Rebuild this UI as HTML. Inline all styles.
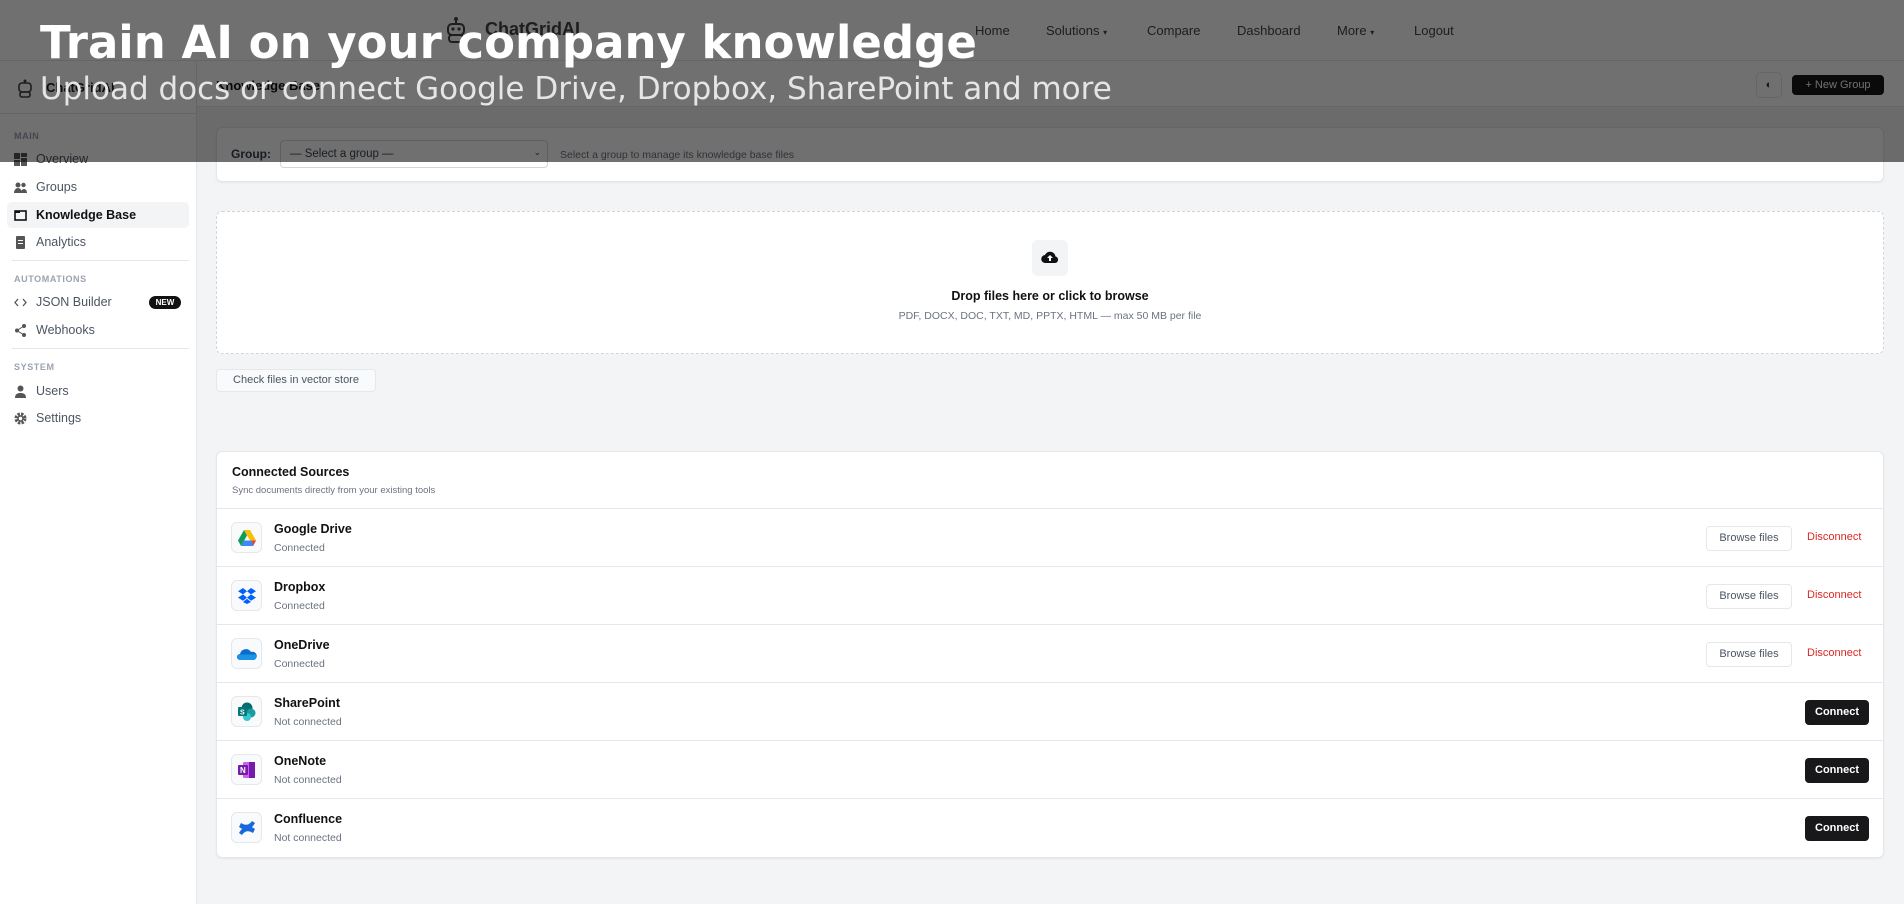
<!DOCTYPE html>
<html><head><meta charset="utf-8"><style>
*{box-sizing:border-box;margin:0;padding:0}
body{width:1904px;height:904px;overflow:hidden;background:#f3f4f6;font-family:"Liberation Sans",Arial,sans-serif;color:#111;position:relative}
.abs{position:absolute}
.top{left:0;top:0;width:1904px;height:61px;background:#fff;border-bottom:1px solid #e5e7eb}
.nav{top:23px;font-size:13px;color:#444}
.side{left:0;top:61px;width:197px;height:843px;background:#fff;border-right:1px solid #e5e7eb}
.sl{left:14px;font-size:9px;letter-spacing:.6px;color:#9ca3af;font-weight:bold}
.si{left:14px;font-size:12.5px;color:#4b5563;display:flex;align-items:center;gap:9px}
.si svg{width:13px;height:13px}
.card{background:#fff;border:1px solid #e5e7eb;border-radius:6px;box-shadow:0 1px 2px rgba(0,0,0,.06)}
.row{left:0;width:1668px;height:58px;border-top:1px solid #e5e7eb}
.ic{left:14px;top:13px;width:31px;height:31px;border:1px solid #e5e7eb;border-radius:6px;background:#f9fafb;display:flex;align-items:center;justify-content:center}
.nm{left:57px;top:13px;font-size:12.5px;font-weight:bold;color:#111}
.st{left:57px;top:33px;font-size:10.5px;color:#6b7280}
.bf{left:1489px;top:17px;width:86px;height:25px;border:1px solid #e5e7eb;border-radius:4px;font-size:11px;color:#4b5563;text-align:center;line-height:23px}
.dc{left:1590px;top:22px;font-size:11px;color:#dc2626}
.cn{left:1588px;top:17px;width:64px;height:25px;background:#18181b;border-radius:4px;color:#fff;font-size:11px;font-weight:bold;text-align:center;line-height:25px}
.ov{left:0;top:0;width:1904px;height:162px;background:rgba(0,0,0,.56)}
</style></head><body>
<div class="abs top"></div>
<svg class="abs" style="left:445px;top:16px" width="22" height="28" viewBox="0 0 22 28"><circle cx="11" cy="3" r="2" fill="#444"/><rect x="10" y="4" width="2" height="4" fill="#444"/><rect x="3" y="8" width="16" height="11" rx="4" fill="none" stroke="#444" stroke-width="2"/><circle cx="8" cy="13" r="1.6" fill="#444"/><circle cx="14" cy="13" r="1.6" fill="#444"/><rect x="4" y="19" width="14" height="7" rx="3" fill="none" stroke="#444" stroke-width="2"/></svg>
<div class="abs" style="left:485px;top:19px;font-size:18px;font-weight:bold;color:#444">ChatGridAI</div>
<div class="abs nav" style="left:975px">Home</div>
<div class="abs nav" style="left:1046px">Solutions <span style="font-size:8px">▾</span></div>
<div class="abs nav" style="left:1147px">Compare</div>
<div class="abs nav" style="left:1237px">Dashboard</div>
<div class="abs nav" style="left:1337px">More <span style="font-size:8px">▾</span></div>
<div class="abs nav" style="left:1414px">Logout</div>

<div class="abs side"></div>
<div class="abs" style="left:0;top:113px;width:197px;border-top:1px solid #e5e7eb"></div>
<svg class="abs" style="left:17px;top:79px" width="16" height="20" viewBox="0 0 16 20"><circle cx="8" cy="2" r="1.5" fill="#444"/><rect x="2" y="4" width="12" height="9" rx="3" fill="none" stroke="#444" stroke-width="1.6"/><rect x="3" y="13" width="10" height="5" rx="2" fill="none" stroke="#444" stroke-width="1.6"/></svg>
<div class="abs" style="left:46px;top:80px;font-size:13px;font-weight:bold;color:#222">ChatGridAI</div>
<div class="abs" style="left:197px;top:61px;width:1707px;height:46px;background:#fff;border-bottom:1px solid #e5e7eb"></div>
<div class="abs" style="left:216px;top:78px;font-size:13px;font-weight:bold">Knowledge Base</div>
<div class="abs" style="left:1756px;top:72px;width:26px;height:26px;border:1px solid #e5e7eb;border-radius:5px;text-align:center;line-height:24px;font-size:11px;color:#333">◐</div>
<div class="abs" style="left:1792px;top:75px;width:92px;height:20px;background:#18181b;border-radius:4px;color:#fff;font-size:11px;text-align:center;line-height:20px">+ New Group</div>

<div class="abs sl" style="top:131px">MAIN</div>
<div class="abs si" style="top:152px"><svg viewBox="0 0 13 13"><rect x="0" y="0" width="6" height="6" fill="#555"/><rect x="7" y="0" width="6" height="4" fill="#555"/><rect x="0" y="7" width="6" height="6" fill="#555"/><rect x="7" y="5" width="6" height="8" fill="#555"/></svg>Overview</div>
<div class="abs si" style="top:180px"><svg viewBox="0 0 13 13"><circle cx="4" cy="4" r="2.5" fill="#555"/><circle cx="9.5" cy="4" r="2.2" fill="#555"/><path d="M0 12c0-3 2-5 4-5s4 2 4 5z M7 12c0-2 1-4 3-4s3 2 3 4z" fill="#555"/></svg>Groups</div>
<div class="abs" style="left:7px;top:202px;width:182px;height:26px;background:#f3f4f6;border-radius:5px"></div>
<div class="abs si" style="top:208px;color:#111;font-weight:bold"><svg viewBox="0 0 13 13"><rect x="1" y="2" width="11" height="9" fill="none" stroke="#111" stroke-width="1.6"/><rect x="1" y="2" width="5" height="2" fill="#111"/></svg>Knowledge Base</div>
<div class="abs si" style="top:235px"><svg viewBox="0 0 13 13"><rect x="2" y="0" width="9" height="13" rx="1" fill="#555"/><rect x="4" y="4" width="5" height="1" fill="#fff"/><rect x="4" y="7" width="5" height="1" fill="#fff"/></svg>Analytics</div>
<div class="abs" style="left:12px;top:260px;width:177px;border-top:1px solid #e5e7eb"></div>
<div class="abs sl" style="top:274px">AUTOMATIONS</div>
<div class="abs si" style="top:295px"><svg viewBox="0 0 13 13"><path d="M4 3L1 6.5 4 10M9 3l3 3.5L9 10" fill="none" stroke="#555" stroke-width="1.3"/></svg>JSON Builder</div>
<div class="abs" style="left:149px;top:296px;width:32px;height:13px;background:#111;border-radius:7px;color:#fff;font-size:8px;font-weight:bold;text-align:center;line-height:13px">NEW</div>
<div class="abs si" style="top:323px"><svg viewBox="0 0 13 13"><circle cx="10" cy="2" r="2" fill="#555"/><circle cx="3" cy="6.5" r="2" fill="#555"/><circle cx="10" cy="11" r="2" fill="#555"/><path d="M10 2L3 6.5 10 11" stroke="#555" fill="none"/></svg>Webhooks</div>
<div class="abs" style="left:12px;top:348px;width:177px;border-top:1px solid #e5e7eb"></div>
<div class="abs sl" style="top:362px">SYSTEM</div>
<div class="abs si" style="top:384px"><svg viewBox="0 0 13 13"><circle cx="6.5" cy="3.5" r="3" fill="#555"/><path d="M1 13c0-4 2.5-5 5.5-5s5.5 1 5.5 5z" fill="#555"/></svg>Users</div>
<div class="abs si" style="top:411px"><svg viewBox="0 0 13 13"><circle cx="6.5" cy="6.5" r="4.5" fill="none" stroke="#555" stroke-width="3" stroke-dasharray="2.4 1.2"/><circle cx="6.5" cy="6.5" r="2.5" fill="none" stroke="#555" stroke-width="1.5"/></svg>Settings</div>

<div class="abs card" style="left:216px;top:127px;width:1668px;height:55px"></div>
<div class="abs" style="left:231px;top:147px;font-size:12px;font-weight:bold;color:#374151">Group:</div>
<div class="abs" style="left:280px;top:140px;width:268px;height:28px;border:1px solid #d1d5db;border-radius:4px;background:#fff;font-size:11.5px;color:#374151;padding:7px 9px">— Select a group —<span style="position:absolute;right:6px;top:6px;font-size:9px">⌄</span></div>
<div class="abs" style="left:560px;top:149px;font-size:10.5px;color:#6b7280">Select a group to manage its knowledge base files</div>

<div class="abs" style="left:216px;top:211px;width:1668px;height:143px;border:1px dashed #d1d5db;border-radius:6px;background:#fff"></div>
<div class="abs" style="left:1032px;top:240px;width:36px;height:36px;background:#f3f4f6;border-radius:6px"></div>
<svg class="abs" style="left:1041px;top:250px" width="18" height="14" viewBox="0 0 18 14"><path d="M4.5 13a4 4 0 0 1-.5-8 5.5 5.5 0 0 1 10.5 1.5 3.3 3.3 0 0 1-.5 6.5z" fill="#111"/><path d="M9 5l-3 3h2v3h2V8h2z" fill="#fff"/></svg>
<div class="abs" style="left:216px;width:1668px;top:289px;text-align:center;font-size:12.5px;font-weight:bold">Drop files here or click to browse</div>
<div class="abs" style="left:216px;width:1668px;top:310px;text-align:center;font-size:10.5px;color:#6b7280">PDF, DOCX, DOC, TXT, MD, PPTX, HTML — max 50 MB per file</div>
<div class="abs" style="left:216px;top:369px;width:160px;height:23px;border:1px solid #e5e7eb;border-radius:4px;background:#f9fafb;font-size:11px;color:#4b5563;text-align:center;line-height:21px">Check files in vector store</div>

<div class="abs card" style="left:216px;top:451px;width:1668px;height:407px;overflow:hidden">
<div class="abs" style="left:15px;top:13px;font-size:12.5px;font-weight:bold">Connected Sources</div>
<div class="abs" style="left:15px;top:33px;font-size:9.5px;color:#6b7280">Sync documents directly from your existing tools</div>

<div class="abs row" style="top:56px"><div class="abs ic"><svg width="18" height="16" viewBox="0 0 18 16"><path d="M6 0h6l6 10.5h-6z" fill="#fbbc04"/><path d="M6 0L0 10.5l3 5.5 6-10.5z" fill="#0f9d58"/><path d="M3 16h12l3-5.5H6z" fill="#4285f4"/><path d="M15 16l3-5.5h-4z" fill="#ea4335"/></svg></div><div class="abs nm">Google Drive</div><div class="abs st">Connected</div><div class="abs bf">Browse files</div><div class="abs dc">Disconnect</div></div>
<div class="abs row" style="top:114px"><div class="abs ic"><svg width="18" height="16" viewBox="0 0 18 16"><path d="M5 0L0 3.2l5 3.2 4-3.2zM13 0L9 3.2l4 3.2 5-3.2zM0 9.6l5 3.2 4-3.2-4-3.2zM13 6.4L9 9.6l4 3.2 5-3.2zM5 14l4 2 4-2-4-3.2z" fill="#0061fe"/></svg></div><div class="abs nm">Dropbox</div><div class="abs st">Connected</div><div class="abs bf">Browse files</div><div class="abs dc">Disconnect</div></div>
<div class="abs row" style="top:172px"><div class="abs ic"><svg width="20" height="12" viewBox="0 0 20 12"><path d="M3 12a3 3 0 0 1 0-6 6 6 0 0 1 11-2 4 4 0 0 1 3 8z" fill="#0a6ccc"/><path d="M3 12a3 3 0 0 1-1-5.5h17a4 4 0 0 1-2 5.5z" fill="#1b94e8"/></svg></div><div class="abs nm">OneDrive</div><div class="abs st">Connected</div><div class="abs bf">Browse files</div><div class="abs dc">Disconnect</div></div>
<div class="abs row" style="top:230px"><div class="abs ic"><svg width="20" height="20" viewBox="0 0 20 20"><circle cx="10" cy="6" r="5.5" fill="#036c70"/><circle cx="14" cy="11" r="4.5" fill="#1a9ba1"/><circle cx="10" cy="15" r="4" fill="#37c6d0"/><rect x="1" y="5" width="9" height="9" rx="1" fill="#03787c"/><text x="3" y="12.5" font-size="7" font-weight="bold" fill="#fff" font-family="Liberation Sans">S</text></svg></div><div class="abs nm">SharePoint</div><div class="abs st">Not connected</div><div class="abs cn">Connect</div></div>
<div class="abs row" style="top:288px"><div class="abs ic"><svg width="20" height="18" viewBox="0 0 20 18"><rect x="6" y="1" width="12" height="16" rx="1" fill="#ca64ea"/><rect x="12" y="1" width="6" height="16" fill="#7719aa"/><rect x="1" y="4" width="10" height="10" rx="1" fill="#7719aa"/><text x="3" y="12" font-size="8" font-weight="bold" fill="#fff" font-family="Liberation Sans">N</text></svg></div><div class="abs nm">OneNote</div><div class="abs st">Not connected</div><div class="abs cn">Connect</div></div>
<div class="abs row" style="top:346px"><div class="abs ic"><svg width="18" height="18" viewBox="0 0 18 18"><path d="M1 14c4-7 9-9 16-4l-2 4c-5-3-8-2-11 2z" fill="#1868db"/><path d="M17 4C13 11 8 13 1 8l2-4c5 3 8 2 11-2z" fill="#1868db"/></svg></div><div class="abs nm">Confluence</div><div class="abs st">Not connected</div><div class="abs cn">Connect</div></div>
</div>

<div class="abs ov"></div>
<div class="abs" style="left:40px;top:16px;font-family:'DejaVu Sans',sans-serif;font-size:45px;font-weight:bold;color:#fff;white-space:nowrap">Train AI on your company knowledge</div>
<div class="abs" style="left:40px;top:71px;font-family:'DejaVu Sans',sans-serif;font-size:31px;color:#e5e5e5;white-space:nowrap">Upload docs or connect Google Drive, Dropbox, SharePoint and more</div>
</body></html>
